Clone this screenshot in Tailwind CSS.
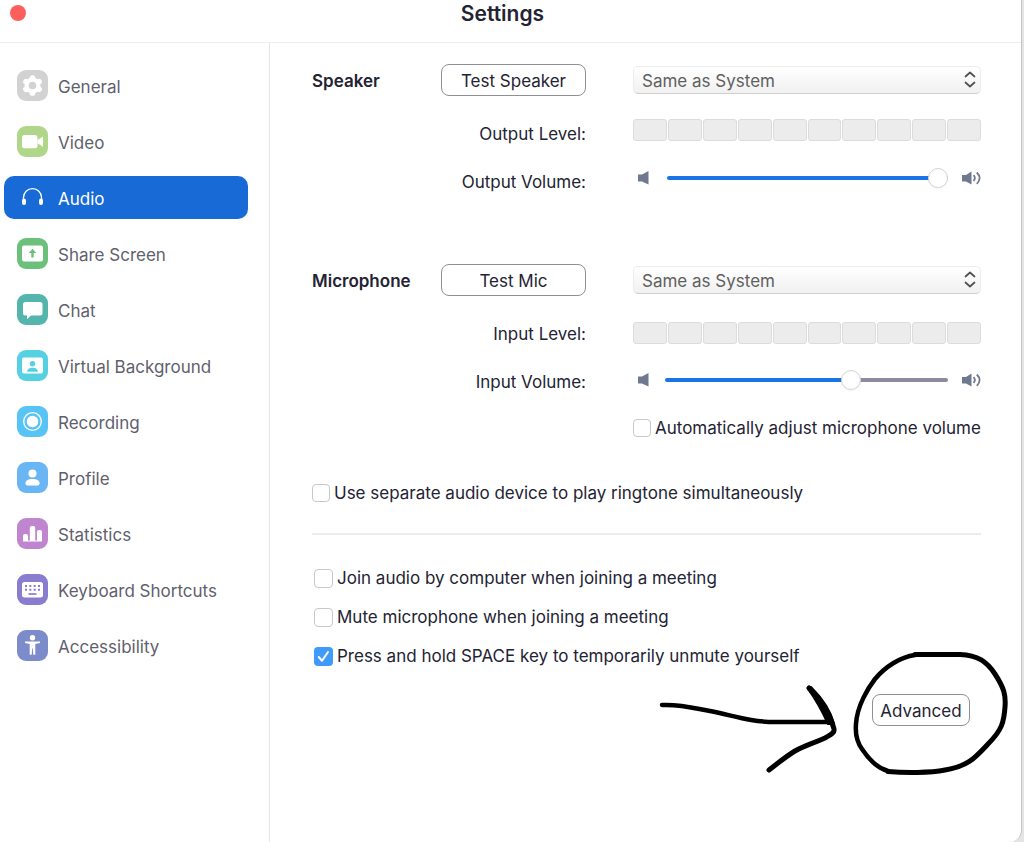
<!DOCTYPE html>
<html lang="en">
<head>
    <meta charset="UTF-8">
    <meta name="viewport" content="width=device-width, initial-scale=1.0">
    <title>Settings</title>
    <script src="https://cdn.jsdelivr.net/npm/@tailwindcss/browser@4"></script>
</head>
<body class="bg-[#e4e4e4] font-['Inter','Liberation_Sans',sans-serif] text-[17px] leading-6 text-[#232333]">
    <div class="min-h-screen mr-0.5 flex flex-col bg-white rounded-br-xl border-r border-[#c4c4c4]">
        <!-- Title bar -->
        <header class="relative h-[43px] pb-[14px] pr-4 flex items-center justify-center border-b border-[#ededf2]">
            <button type="button" aria-label="Close" class="absolute left-2.5 top-[5px] size-4 rounded-full bg-[#fc605c]"></button>
            <h1 class="text-[21px] leading-6 font-semibold">Settings</h1>
        </header>

        <div class="flex flex-1">
            <!-- Sidebar -->
            <nav class="w-[270px] shrink-0 pt-[21px] pl-1 pr-[21px] flex flex-col gap-[13px] border-r border-[#e4e4ea] text-[#5f5f6e]">
                <a href="#" class="h-[43px] pl-[13px] flex items-center gap-2.5 rounded-[10px]">
                    <svg class="size-[31px]" viewBox="0 0 31 31"><rect width="31" height="31" rx="9" fill="#d2d2d2"/><g fill="#fff"><circle cx="15.500" cy="15.500" r="8"/><rect x="12.700" y="5.200" width="5.600" height="20.600" rx="2.600"/><rect x="12.700" y="5.200" width="5.600" height="20.600" rx="2.600" transform="rotate(60 15.500 15.500)"/><rect x="12.700" y="5.200" width="5.600" height="20.600" rx="2.600" transform="rotate(120 15.500 15.500)"/></g><circle cx="15.500" cy="15.500" r="3.800" fill="#d2d2d2"/></svg>
                    <span class="pt-0.5">General</span>
                </a>
                <a href="#" class="h-[43px] pl-[13px] flex items-center gap-2.5 rounded-[10px]">
                    <svg class="size-[31px]" viewBox="0 0 31 31"><rect width="31" height="31" rx="9" fill="#b0d789"/><rect x="5" y="9" width="15.500" height="13.200" rx="2.500" fill="#fff"/><path d="M20.500 14 26 10.500V20.700L20.500 17.200Z" fill="#fff"/></svg>
                    <span class="pt-0.5">Video</span>
                </a>
                <a href="#" aria-current="page" class="h-[43px] pl-[13px] flex items-center gap-2.5 rounded-[10px] bg-[#186ad6] text-white">
                    <svg class="size-[31px]" viewBox="0 0 31 31"><path d="M6.500 20V15.500a9 8.800 0 0 1 18 0V20" fill="none" stroke="#fff" stroke-width="1.300"/><rect x="5" y="16.500" width="4" height="6.500" rx="2" fill="#fff"/><rect x="22" y="16.500" width="4" height="6.500" rx="2" fill="#fff"/></svg>
                    <span class="pt-0.5">Audio</span>
                </a>
                <a href="#" class="h-[43px] pl-[13px] flex items-center gap-2.5 rounded-[10px]">
                    <svg class="size-[31px]" viewBox="0 0 31 31"><rect width="31" height="31" rx="9" fill="#6dc07c"/><rect x="5" y="7.500" width="21" height="16" rx="2" fill="#fff"/><path d="M15.500 10.800 19.300 15H16.700V19.500H14.300V15H11.700Z" fill="#6dc07c"/></svg>
                    <span class="pt-0.5">Share Screen</span>
                </a>
                <a href="#" class="h-[43px] pl-[13px] flex items-center gap-2.5 rounded-[10px]">
                    <svg class="size-[31px]" viewBox="0 0 31 31"><rect width="31" height="31" rx="9" fill="#53b5ab"/><path d="M8.500 8H23a2.500 2.500 0 0 1 2.500 2.500V19a2.500 2.500 0 0 1-2.500 2.500H14L10 25.300V21.500H8.500A2.500 2.500 0 0 1 6 19V10.500A2.500 2.500 0 0 1 8.500 8Z" fill="#fff"/></svg>
                    <span class="pt-0.5">Chat</span>
                </a>
                <a href="#" class="h-[43px] pl-[13px] flex items-center gap-2.5 rounded-[10px]">
                    <svg class="size-[31px]" viewBox="0 0 31 31"><rect width="31" height="31" rx="9" fill="#55d1e2"/><rect x="5" y="7.500" width="21" height="16" rx="2" fill="#fff"/><circle cx="15.500" cy="13.800" r="2.700" fill="#55d1e2"/><path d="M10.200 21.700c0-2.800 2.300-3.900 5.300-3.900s5.300 1.100 5.300 3.900Z" fill="#55d1e2"/></svg>
                    <span class="pt-0.5">Virtual Background</span>
                </a>
                <a href="#" class="h-[43px] pl-[13px] flex items-center gap-2.5 rounded-[10px]">
                    <svg class="size-[31px]" viewBox="0 0 31 31"><rect width="31" height="31" rx="9" fill="#58c4f5"/><circle cx="15.500" cy="15.500" r="8.800" fill="none" stroke="#fff" stroke-width="1.300"/><circle cx="15.500" cy="15.500" r="5.800" fill="#fff"/></svg>
                    <span class="pt-0.5">Recording</span>
                </a>
                <a href="#" class="h-[43px] pl-[13px] flex items-center gap-2.5 rounded-[10px]">
                    <svg class="size-[31px]" viewBox="0 0 31 31"><rect width="31" height="31" rx="9" fill="#6ab6f5"/><circle cx="15.500" cy="11.500" r="4" fill="#fff"/><path d="M8.500 21.300c0-3.200 3.200-4.300 7-4.300s7 1.100 7 4.300c0 1.500-.8 2.200-2 2.200h-10c-1.200 0-2-.7-2-2.200Z" fill="#fff"/></svg>
                    <span class="pt-0.5">Profile</span>
                </a>
                <a href="#" class="h-[43px] pl-[13px] flex items-center gap-2.5 rounded-[10px]">
                    <svg class="size-[31px]" viewBox="0 0 31 31"><rect width="31" height="31" rx="9" fill="#c085cf"/><path d="M6 23.500V18a2 2 0 0 1 2-2h1a2 2 0 0 1 2 2v4.500h1.800V10a2 2 0 0 1 2-2h1.400a2 2 0 0 1 2 2v12.500H20V14a2 2 0 0 1 2-2h1a2 2 0 0 1 2 2v9.500Z" fill="#fff"/></svg>
                    <span class="pt-0.5">Statistics</span>
                </a>
                <a href="#" class="h-[43px] pl-[13px] flex items-center gap-2.5 rounded-[10px]">
                    <svg class="size-[31px]" viewBox="0 0 31 31"><rect width="31" height="31" rx="9" fill="#8a7ccf"/><rect x="5" y="8" width="21" height="15.500" rx="2.500" fill="#fff"/><path d="M8 12h15M8 15.800h15" stroke="#8a7ccf" stroke-width="2" stroke-dasharray="2 2.330"/><path d="M11.500 20h8" stroke="#8a7ccf" stroke-width="1.700"/></svg>
                    <span class="pt-0.5">Keyboard Shortcuts</span>
                </a>
                <a href="#" class="h-[43px] pl-[13px] flex items-center gap-2.5 rounded-[10px]">
                    <svg class="size-[31px]" viewBox="0 0 31 31"><rect width="31" height="31" rx="9" fill="#7c8bca"/><circle cx="15.500" cy="7.800" r="2.700" fill="#fff"/><path d="M8 11.500H23V13L18.300 14V24.800H16.300L15.800 18.500H15.200L14.700 24.800H12.700V14L8 13Z" fill="#fff"/></svg>
                    <span class="pt-0.5">Accessibility</span>
                </a>
            </nav>

            <!-- Audio settings -->
            <main class="flex-1 pt-[21px] pl-[42px] pr-10">
                <section class="grid grid-cols-[129px_145px_1fr] items-center">
                    <h2 class="pt-0.5 font-semibold">Speaker</h2>
                    <button type="button" class="h-8 pt-0.5 rounded-lg border border-[#8f8f98]">Test Speaker</button>
                    <div class="relative ml-[47px]">
                        <select aria-label="Speaker device" class="block w-full h-7 pl-2 pt-0.5 appearance-none rounded-[5px] border border-[#ececec] border-b-[#cfcfcf] bg-linear-to-b from-white to-[#f1f1f1] text-[#606060]">
                            <option>Same as System</option>
                        </select>
                        <svg class="absolute right-[5px] top-1 w-3 h-5 pointer-events-none" viewBox="0 0 12 20" fill="none" stroke="#505050" stroke-width="1.700" stroke-linecap="round" stroke-linejoin="round"><path d="M1.500 6.500 6 2.500 10.500 6.500M1.500 12.500 6 16.500 10.500 12.500"/></svg>
                    </div>

                    <span class="col-span-2 mt-[26px] text-right">Output Level:</span>
                    <div class="ml-[47px] mt-[18px] h-[22px] grid grid-cols-10 gap-px">
                        <span class="rounded-[3px] border border-[#dcdcdc] bg-[#ececec]"></span>
                        <span class="rounded-[3px] border border-[#dcdcdc] bg-[#ececec]"></span>
                        <span class="rounded-[3px] border border-[#dcdcdc] bg-[#ececec]"></span>
                        <span class="rounded-[3px] border border-[#dcdcdc] bg-[#ececec]"></span>
                        <span class="rounded-[3px] border border-[#dcdcdc] bg-[#ececec]"></span>
                        <span class="rounded-[3px] border border-[#dcdcdc] bg-[#ececec]"></span>
                        <span class="rounded-[3px] border border-[#dcdcdc] bg-[#ececec]"></span>
                        <span class="rounded-[3px] border border-[#dcdcdc] bg-[#ececec]"></span>
                        <span class="rounded-[3px] border border-[#dcdcdc] bg-[#ececec]"></span>
                        <span class="rounded-[3px] border border-[#dcdcdc] bg-[#ececec]"></span>
                    </div>

                    <label for="outputVolume" class="col-span-2 mt-6 text-right">Output Volume:</label>
                    <div class="ml-[47px] mt-4 pl-[5px] flex items-center">
                        <svg class="w-[11px] h-4 shrink-0" viewBox="0 0 11 16" fill="#6e7890"><path d="M0 4.500H4L10.500 1V14.500L4 11.500H0Z"/></svg>
                        <input type="range" id="outputVolume" min="0" max="100" value="100"
                               style="--fill: 100%"
                               class="ml-[18px] mr-[14px] h-5 flex-1 min-w-0 appearance-none bg-transparent
                                      [&::-webkit-slider-runnable-track]:h-1 [&::-webkit-slider-runnable-track]:rounded-full
                                      [&::-webkit-slider-runnable-track]:bg-[linear-gradient(to_right,#1a74e8_var(--fill),#8c8a9c_var(--fill))]
                                      [&::-webkit-slider-thumb]:appearance-none [&::-webkit-slider-thumb]:size-5 [&::-webkit-slider-thumb]:-mt-2
                                      [&::-webkit-slider-thumb]:rounded-full [&::-webkit-slider-thumb]:bg-white
                                      [&::-webkit-slider-thumb]:border [&::-webkit-slider-thumb]:border-[#d4d4d4] [&::-webkit-slider-thumb]:shadow-xs">
                        <svg class="w-[19px] h-4 shrink-0" viewBox="0 0 19 16"><path d="M0 5H4L9.500 1.500V14.500L4 11.500H0Z" fill="#6e7890"/><path d="M11.500 5.200Q14.300 8 11.500 10.800M14.800 2.500Q20.500 8 14.800 13.800" fill="none" stroke="#6e7890" stroke-width="1.800"/></svg>
                    </div>
                </section>

                <section class="mt-[70px] grid grid-cols-[129px_145px_1fr] items-center">
                    <h2 class="pt-0.5 font-semibold">Microphone</h2>
                    <button type="button" class="h-8 pt-0.5 rounded-lg border border-[#8f8f98]">Test Mic</button>
                    <div class="relative ml-[47px]">
                        <select aria-label="Microphone device" class="block w-full h-7 pl-2 pt-0.5 appearance-none rounded-[5px] border border-[#ececec] border-b-[#cfcfcf] bg-linear-to-b from-white to-[#f1f1f1] text-[#606060]">
                            <option>Same as System</option>
                        </select>
                        <svg class="absolute right-[5px] top-1 w-3 h-5 pointer-events-none" viewBox="0 0 12 20" fill="none" stroke="#505050" stroke-width="1.700" stroke-linecap="round" stroke-linejoin="round"><path d="M1.500 6.500 6 2.500 10.500 6.500M1.500 12.500 6 16.500 10.500 12.500"/></svg>
                    </div>

                    <span class="col-span-2 mt-[26px] text-right">Input Level:</span>
                    <div class="ml-[47px] mt-6 h-[22px] grid grid-cols-10 gap-px">
                        <span class="rounded-[3px] border border-[#dcdcdc] bg-[#ececec]"></span>
                        <span class="rounded-[3px] border border-[#dcdcdc] bg-[#ececec]"></span>
                        <span class="rounded-[3px] border border-[#dcdcdc] bg-[#ececec]"></span>
                        <span class="rounded-[3px] border border-[#dcdcdc] bg-[#ececec]"></span>
                        <span class="rounded-[3px] border border-[#dcdcdc] bg-[#ececec]"></span>
                        <span class="rounded-[3px] border border-[#dcdcdc] bg-[#ececec]"></span>
                        <span class="rounded-[3px] border border-[#dcdcdc] bg-[#ececec]"></span>
                        <span class="rounded-[3px] border border-[#dcdcdc] bg-[#ececec]"></span>
                        <span class="rounded-[3px] border border-[#dcdcdc] bg-[#ececec]"></span>
                        <span class="rounded-[3px] border border-[#dcdcdc] bg-[#ececec]"></span>
                    </div>

                    <label for="inputVolume" class="col-span-2 mt-6 text-right">Input Volume:</label>
                    <div class="ml-[47px] mt-5 pl-[5px] flex items-center">
                        <svg class="w-[11px] h-4 shrink-0" viewBox="0 0 11 16" fill="#6e7890"><path d="M0 4.500H4L10.500 1V14.500L4 11.500H0Z"/></svg>
                        <input type="range" id="inputVolume" min="0" max="100" value="67"
                               style="--fill: 67%"
                               class="ml-4 mr-[14px] h-5 flex-1 min-w-0 appearance-none bg-transparent
                                      [&::-webkit-slider-runnable-track]:h-1 [&::-webkit-slider-runnable-track]:rounded-full
                                      [&::-webkit-slider-runnable-track]:bg-[linear-gradient(to_right,#1a74e8_var(--fill),#8c8a9c_var(--fill))]
                                      [&::-webkit-slider-thumb]:appearance-none [&::-webkit-slider-thumb]:size-5 [&::-webkit-slider-thumb]:-mt-2
                                      [&::-webkit-slider-thumb]:rounded-full [&::-webkit-slider-thumb]:bg-white
                                      [&::-webkit-slider-thumb]:border [&::-webkit-slider-thumb]:border-[#d4d4d4] [&::-webkit-slider-thumb]:shadow-xs">
                        <svg class="w-[19px] h-4 shrink-0" viewBox="0 0 19 16"><path d="M0 5H4L9.500 1.500V14.500L4 11.500H0Z" fill="#6e7890"/><path d="M11.500 5.200Q14.300 8 11.500 10.800M14.800 2.500Q20.500 8 14.800 13.800" fill="none" stroke="#6e7890" stroke-width="1.800"/></svg>
                    </div>

                    <label class="col-span-3 ml-[321px] mt-[22px] flex items-center gap-1 whitespace-nowrap">
                        <input type="checkbox" class="size-[18px] shrink-0 appearance-none rounded-[4px] border border-[#c8c8c8] bg-white">
                        Automatically adjust microphone volume
                    </label>
                </section>

                <label class="mt-[41px] flex items-center gap-1">
                    <input type="checkbox" class="size-[18px] shrink-0 appearance-none rounded-[4px] border border-[#c8c8c8] bg-white">
                    Use separate audio device to play ringtone simultaneously
                </label>

                <hr class="mt-7 border-t-2 border-[#ececec]">

                <div class="mt-[31px] pl-0.5 flex flex-col gap-[15px]">
                    <label class="flex items-center gap-1">
                        <input type="checkbox" class="size-[19px] shrink-0 appearance-none rounded-[4px] border border-[#c8c8c8] bg-white">
                        Join audio by computer when joining a meeting
                    </label>
                    <label class="flex items-center gap-1">
                        <input type="checkbox" class="size-[19px] shrink-0 appearance-none rounded-[4px] border border-[#c8c8c8] bg-white">
                        Mute microphone when joining a meeting
                    </label>
                    <label class="flex items-center gap-1">
                        <span class="relative size-[19px]">
                            <input type="checkbox" checked class="block size-[19px] appearance-none rounded-[4px] bg-[#3f9afa]">
                            <svg class="absolute inset-0 pointer-events-none" viewBox="0 0 19 19" fill="none" stroke="#fff" stroke-width="2" stroke-linecap="round" stroke-linejoin="round"><path d="M4.800 10 8 13.800 14 5"/></svg>
                        </span>
                        Press and hold SPACE key to temporarily unmute yourself
                    </label>
                </div>

                <div class="relative mt-[26px] pr-[11px] flex justify-end">
                    <button type="button" class="w-[98px] h-8 pt-0.5 rounded-lg border border-[#8f8f98]">Advanced</button>
                    <!-- Hand-drawn arrow and circle -->
                    <svg class="absolute -right-[31px] -top-[46px] w-[356px] h-[132px] pointer-events-none" viewBox="656 648 356 132" fill="none" stroke="#000" stroke-linecap="round" stroke-linejoin="round">
                        <path d="M662 705C680 704 694 708 710 711C735 716 750 722 775 722H832" stroke-width="4.500"/>
                        <path d="M809 688C820 699 830 712 834 729C835 733 830 735 825 738C812 744 805 745 795 751C785 757 777 764 769 770" stroke-width="5"/>
                        <path d="M808 689C816 700 822 711 828 724L834 724C831 711 821 697 811 687Z" fill="#000" stroke-width="2"/>
                        <path d="M915 655C900 657 885 667 875 679C868 688 857 706 856 724C855 735 857 742 862 749C868 758 876 768 888 771" stroke-width="4.500"/>
                        <path d="M915 654.500H960C978 655 987 662 995 674C1004 688 1006 695 1005 707C1004 722 1002 730 988 744C974 759 968 766 945 770C930 773 905 773 888 771.500" stroke-width="5"/>
                    </svg>
                </div>
            </main>
        </div>
    </div>
</body>
</html>
